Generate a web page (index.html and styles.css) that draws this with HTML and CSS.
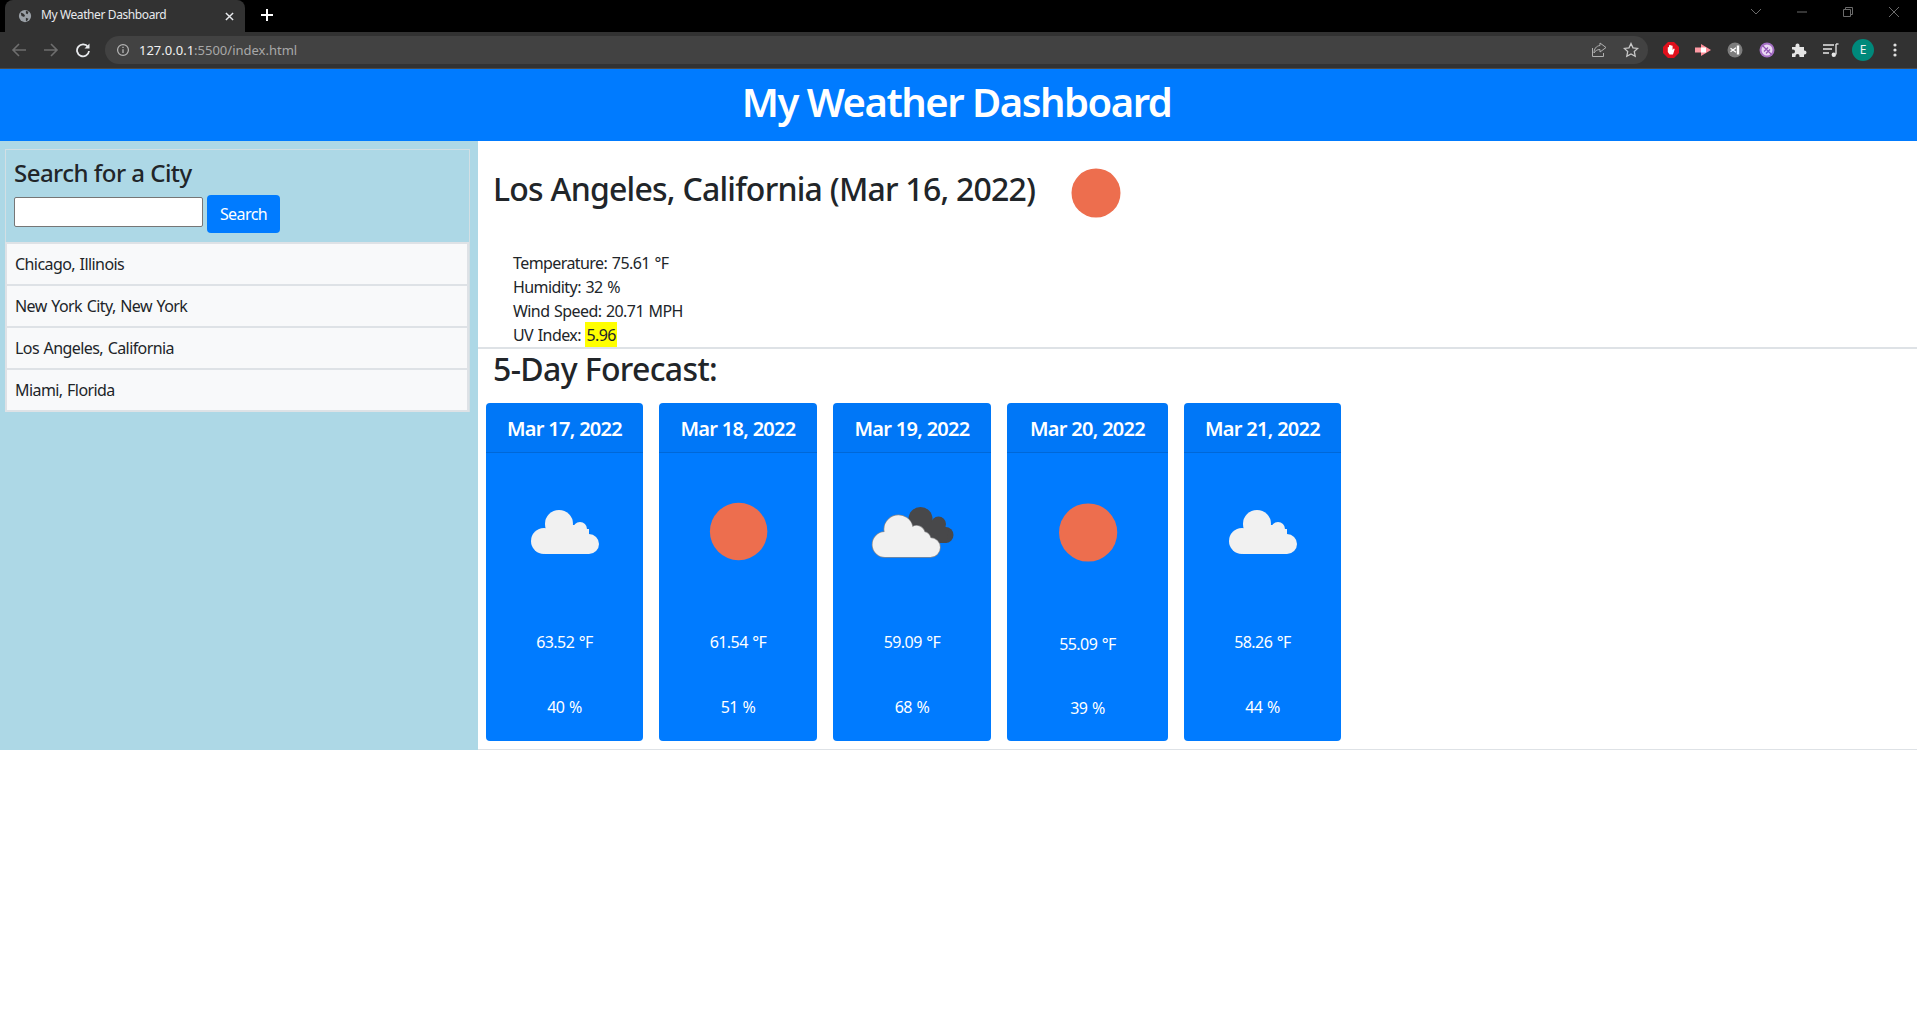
FILE: index.html
```html
<!DOCTYPE html>
<html lang="en">
<head>
<meta charset="utf-8">
<title>My Weather Dashboard</title>
<link rel="stylesheet" href="styles.css">
</head>
<body>
<svg class="defs" width="0" height="0" aria-hidden="true">
  <symbol id="sun" viewBox="0 0 100 100"><circle cx="50.400" cy="50" r="18.300" fill="#ed6e4e"/></symbol>
  <symbol id="sun-large" viewBox="0 0 100 100"><circle cx="50" cy="50" r="24.500" fill="#ed6e4e"/></symbol>
  <symbol id="cloud" viewBox="0 0 157 157">
    <g transform="translate(45 57)" fill="#f1f1f1">
      <circle cx="13" cy="31" r="13"/><circle cx="28" cy="14" r="14"/><circle cx="49" cy="19" r="7"/><circle cx="58" cy="34" r="10"/>
      <rect x="14" y="19" width="44" height="25"/><rect x="28" y="15" width="21" height="6"/><rect x="50" y="24" width="8" height="4"/>
    </g>
  </symbol>
  <symbol id="clouds" viewBox="0 0 157 157">
    <g transform="translate(39 61)">
      <g fill="#48484a"><circle cx="48" cy="5" r="12"/><circle cx="66" cy="10" r="7.500"/><circle cx="73" cy="21" r="8"/><path d="M44 8h24l8 8-2 13H58z"/></g>
      <path d="M13 43a12.500 12.500 0 0 1-1-25 14 14 0 0 1 28-5 8 8 0 0 1 12 5 8 8 0 0 1 6 6 9.500 9.500 0 0 1 0 19z" fill="#f1f1f1" stroke="#8c8c8e" stroke-width="1.500" paint-order="stroke"/>
    </g>
  </symbol>
</svg>

<div class="browser">
  <div class="tabstrip">
    <div class="tab">
      <svg class="favicon" viewBox="0 0 16 16"><circle cx="8" cy="8" r="7" fill="#9aa0a6"/><path d="M3 4l3 1 2 2-1 2-3-1zM9 2l3 1-1 3-2-1zM9 10l3 1-2 3-1-1z" fill="#323232"/></svg>
      <span class="tab-title">My Weather Dashboard</span>
      <svg class="tab-close" viewBox="0 0 10 10"><path d="M1 1l8 8M9 1l-8 8" stroke="#e8eaed" stroke-width="1.600"/></svg>
    </div>
    <svg class="new-tab" viewBox="0 0 12 12"><path d="M6 0v12M0 6h12" stroke="#fff" stroke-width="2"/></svg>
    <div class="window-controls">
      <svg class="win" viewBox="0 0 12 12"><path d="M1 3l5 5 5-5" stroke="#6b6b6b" fill="none"/></svg>
      <svg class="win" viewBox="0 0 12 12"><path d="M1 6h10" stroke="#6b6b6b"/></svg>
      <svg class="win" viewBox="0 0 12 12"><path d="M1.500 3.500h7v7h-7zM3.500 3.500v-2h7v7h-2" stroke="#6b6b6b" fill="none"/></svg>
      <svg class="win" viewBox="0 0 12 12"><path d="M1 1l10 10M11 1L1 11" stroke="#6b6b6b" fill="none"/></svg>
    </div>
  </div>
  <div class="toolbar">
    <div class="nav">
      <svg class="nav-icon" viewBox="0 0 16 16"><path d="M15 8H2M8 2L2 8l6 6" stroke="#6e6e6e" stroke-width="1.600" fill="none"/></svg>
      <svg class="nav-icon" viewBox="0 0 16 16"><path d="M1 8h13M8 2l6 6-6 6" stroke="#6e6e6e" stroke-width="1.600" fill="none"/></svg>
      <svg class="nav-icon" viewBox="0 0 16 16"><path d="M13 5a6 6 0 1 0 1 4" stroke="#e8eaed" stroke-width="1.800" fill="none"/><path d="M14.500 1.500v5h-5z" fill="#e8eaed"/></svg>
    </div>
    <div class="omnibox">
      <svg class="info" viewBox="0 0 16 16"><circle cx="8" cy="8" r="6.200" stroke="#b5b5b5" stroke-width="1.400" fill="none"/><path d="M8 7v4.500M8 4.200v1.500" stroke="#b5b5b5" stroke-width="1.500"/></svg>
      <span class="url"><span class="url-host">127.0.0.1</span>:5500/index.html</span>
      <span class="spacer"></span>
      <svg class="omni-icon" viewBox="0 0 16 16"><path d="M9 3.500V1l6 4.500L9 10V7.500C6 7.500 4 9 3 11 3 7 5 4 9 3.500zM1.500 6v8.500h11V11" stroke="#b0b0b0" stroke-width="1" fill="none"/></svg>
      <svg class="omni-icon" viewBox="0 0 16 16"><path d="M8 1.500l2 4.300 4.700.6-3.400 3.200.9 4.700L8 12l-4.200 2.300.9-4.700L1.300 6.400 6 5.800z" stroke="#c8c8c8" stroke-width="1.300" fill="none"/></svg>
    </div>
    <div class="extensions">
      <svg class="ext" viewBox="0 0 16 16"><path d="M5 0h6l5 5v6l-5 5H5l-5-5V5z" fill="#e0101c"/><path d="M4.800 8V5.500a.6.600 0 0 1 1.200 0V3.500a.6.600 0 0 1 1.200 0 .6.600 0 0 1 1.200 0V4a.6.600 0 0 1 1.200 0V8l.9-1.200a.7.700 0 0 1 1.100.8L10 12.500H6.500L4.800 10z" fill="#fff"/></svg>
      <svg class="ext" viewBox="0 0 16 16"><path d="M6 2l10 6-10 6z" fill="#ff8d99"/><path d="M0 5.500h10v5H0z" fill="#ff9aa4"/><path d="M6 5.500h5v5H6z" fill="#fff"/></svg>
      <svg class="ext" viewBox="0 0 16 16"><circle cx="8" cy="8" r="7.500" fill="#7d7d7d"/><path d="M3.500 6.200l5.500 4M3.500 9.800l5.500-4" stroke="#fff" stroke-width="1.300"/><path d="M11 3.500v9" stroke="#fff" stroke-width="2.400"/></svg>
      <svg class="ext" viewBox="0 0 16 16"><circle cx="8" cy="8" r="7.500" fill="#a46fc4"/><circle cx="8" cy="8" r="5.500" fill="#ead9f3"/><path d="M3.500 3.500l9 9M5 9.500l4-4M7 11.500l4-4" stroke="#9054b5" stroke-width="1.200"/></svg>
      <svg class="ext" viewBox="0 0 16 16"><path d="M1 5h3.500V3.500a2 2 0 0 1 4 0V5H13v3.500h.5a2 2 0 0 1 0 4H13V15H8.500v-1a2 2 0 0 0-4 0v1H1v-3.500h1a2 2 0 0 0 0-4H1z" fill="#e4e4e4"/></svg>
      <svg class="ext" viewBox="0 0 16 16"><path d="M0 3h11M0 7h9M0 11h6" stroke="#e8e8e8" stroke-width="1.300"/><path d="M13 2v10.500" stroke="#e8e8e8" stroke-width="1.300"/><path d="M13 2h2.500" stroke="#e8e8e8" stroke-width="1.300"/><circle cx="10.800" cy="12.800" r="2.200" fill="#e8e8e8"/></svg>
      <span class="avatar">E</span>
      <svg class="ext" viewBox="0 0 16 16"><circle cx="8" cy="3" r="1.600" fill="#e0e0e0"/><circle cx="8" cy="8" r="1.600" fill="#e0e0e0"/><circle cx="8" cy="13" r="1.600" fill="#e0e0e0"/></svg>
    </div>
  </div>
</div>

<header class="site-header"><h1 class="site-title">My Weather Dashboard</h1></header>

<div class="content">
  <aside class="sidebar">
    <div class="search-box">
      <div class="search-panel">
        <h4 class="search-title">Search for a City</h4>
        <form class="search-row">
          <input class="search-input" type="text" aria-label="City">
          <button class="search-btn" type="button">Search</button>
        </form>
      </div>
      <ul class="city-list">
        <li class="city">Chicago, Illinois</li>
        <li class="city">New York City, New York</li>
        <li class="city">Los Angeles, California</li>
        <li class="city">Miami, Florida</li>
      </ul>
    </div>
  </aside>
  <main class="main">
    <section class="current">
      <div class="current-head">
        <h2 class="heading">Los Angeles, California (Mar 16, 2022)</h2>
        <svg class="current-icon"><use href="#sun-large"/></svg>
      </div>
      <div class="stats">
        <div>Temperature: 75.61 °F</div>
        <div>Humidity: 32 %</div>
        <div>Wind Speed: 20.71 MPH</div>
        <div>UV Index: <span class="uv">5.96</span></div>
      </div>
    </section>
    <h2 class="heading heading-forecast">5-Day Forecast:</h2>
    <div class="cards">
      <article class="card w157">
        <div class="card-date">Mar 17, 2022</div>
        <svg class="card-icon"><use href="#cloud"/></svg>
        <p class="card-temp">63.52 °F</p><p class="card-hum">40 %</p>
      </article>
      <article class="card w158">
        <div class="card-date">Mar 18, 2022</div>
        <svg class="card-icon"><use href="#sun"/></svg>
        <p class="card-temp">61.54 °F</p><p class="card-hum">51 %</p>
      </article>
      <article class="card w158">
        <div class="card-date">Mar 19, 2022</div>
        <svg class="card-icon"><use href="#clouds"/></svg>
        <p class="card-temp">59.09 °F</p><p class="card-hum">68 %</p>
      </article>
      <article class="card w161">
        <div class="card-date">Mar 20, 2022</div>
        <svg class="card-icon card-icon-tall"><use href="#sun"/></svg>
        <p class="card-temp card-temp-tight">55.09 °F</p><p class="card-hum">39 %</p>
      </article>
      <article class="card w157">
        <div class="card-date">Mar 21, 2022</div>
        <svg class="card-icon"><use href="#cloud"/></svg>
        <p class="card-temp">58.26 °F</p><p class="card-hum">44 %</p>
      </article>
    </div>
  </main>
</div>
</body>
</html>
```
FILE: styles.css
```css
* { box-sizing: border-box; }
html, body { margin: 0; padding: 0; }
body {
  background: #fff;
  color: #212529;
  font-family: "Noto Sans", "Open Sans", sans-serif;
  font-size: 16px;
  line-height: 24px;
  letter-spacing: -0.036em;
  word-spacing: 1px;
}
.defs { display: block; height: 0; }

/* browser chrome */
.browser { height: 69px; background: #323232; border-bottom: 1px solid #4a4a4a; letter-spacing: 0; word-spacing: 0; }
.tabstrip { height: 32px; background: #000; display: flex; align-items: stretch; padding-left: 5px; }
.tab {
  width: 240px;
  background: #323232;
  border-radius: 8px 8px 0 0;
  display: flex;
  align-items: center;
  padding: 0 11px 0 13px;
}
.favicon { width: 14px; height: 14px; flex: none; }
.tab-title { margin-left: 9px; font-size: 12px; line-height: 22px; padding-bottom: 2px; color: #e8eaed; white-space: nowrap; flex: 1; letter-spacing: -0.033em; }
.tab-close { width: 9px; height: 9px; flex: none; }
.new-tab { width: 12px; height: 12px; margin: 9px 0 0 16px; flex: none; }
.window-controls { margin-left: auto; display: flex; gap: 34px; padding: 6px 17px 0 0; align-items: flex-start; }
.win { width: 12px; height: 12px; }
.toolbar { height: 36px; display: flex; align-items: center; padding-left: 11px; }
.nav { display: flex; gap: 16px; width: 94px; flex: none; }
.nav-icon { width: 16px; height: 16px; }
.omnibox {
  width: 1543px;
  height: 28px;
  background: #424242;
  border-radius: 14px;
  display: flex;
  align-items: center;
  padding: 0 9px 0 11px;
  flex: none;
}
.info { width: 14px; height: 14px; flex: none; }
.url { margin-left: 9px; font-size: 13px; color: #a8a8a8; white-space: nowrap; }
.url-host { color: #f1f1f1; }
.spacer { flex: 1; }
.omni-icon { width: 16px; height: 16px; margin-left: 16px; }
.extensions { display: flex; align-items: center; gap: 16px; margin-left: 15px; }
.ext { width: 16px; height: 16px; flex: none; }
.avatar {
  width: 22px;
  height: 22px;
  margin: 0 -3px;
  border-radius: 50%;
  background: #00897b;
  color: #f1f1f1;
  font-size: 12px;
  line-height: 22px;
  text-align: center;
  flex: none;
}

/* page */
.site-header { height: 72px; background: #007bff; color: #fff; display: flex; align-items: flex-start; justify-content: center; padding: 9px 4px 0 0; }
.site-title { margin: 0; font-size: 40px; font-weight: 600; line-height: 48px; letter-spacing: -0.037em; word-spacing: 0; }
.content { height: 609px; display: flex; }

.sidebar { width: 478px; flex: none; background: #add8e6; padding: 8px 8px 0 5px; }
.search-box { border: 1px solid #d3dfe4; border-bottom-width: 0; }
.search-panel { padding: 8px 9px 9px 8px; }
.search-title { margin: 0 0 8px; font-size: 24px; font-weight: 500; line-height: 29px; letter-spacing: -0.022em; word-spacing: 0; }
.search-row { display: flex; align-items: flex-start; gap: 4px; }
.search-input { width: 189px; height: 30px; margin-top: 2px; border: 1px solid #767676; border-radius: 2px; background: #fff; }
.search-btn {
  width: 73px;
  height: 38px;
  border: 0;
  border-radius: 4px;
  background: #007bff;
  color: #fff;
  font: inherit;
  letter-spacing: inherit;
  padding: 0;
}
.city-list { list-style: none; margin: 0 0 0 -1px; padding: 0; width: 464px; }
.city {
  height: 44px;
  margin-bottom: -2px;
  padding-left: 8px;
  background: #f8f9fa;
  border: 2px solid #dee2e6;
  line-height: 40px;
  white-space: nowrap;
}

.main { flex: 1; border-bottom: 1px solid #dee2e6; }
.current { height: 208px; border-bottom: 2px solid #dee2e6; }
.current-head { height: 110px; display: flex; align-items: flex-start; padding-left: 15px; }
.heading { margin: 0; font-size: 32px; font-weight: 500; line-height: 38px; white-space: nowrap; letter-spacing: -0.024em; word-spacing: 0; }
.current-head .heading { margin-top: 29px; }
.current-icon { width: 100px; height: 100px; margin: 2px 0 0 11px; flex: none; }
.stats { padding-left: 35px; }
.uv { background: #ffff00; padding: 2px 1px 1px; }
.heading-forecast { padding: 1px 0 0 15px; height: 54px; letter-spacing: -0.02em; }
.cards { display: flex; gap: 16px; padding-left: 8px; height: 338px; }
.card {
  background: #007bff;
  color: #fff;
  border-radius: 4px;
  text-align: center;
  display: flex;
  flex-direction: column;
  flex: none;
  overflow: hidden;
}
.w157 { width: 157px; }
.w158 { width: 158px; }
.w161 { width: 161px; }
.card-date {
  height: 50px;
  line-height: 51px;
  font-size: 20px;
  font-weight: 600;
  letter-spacing: -0.035em;
  word-spacing: 0;
  background: rgba(0, 0, 0, .03);
  border-bottom: 1px solid rgba(0, 0, 0, .125);
  white-space: nowrap;
}
.card-icon { width: 100%; height: 157px; flex: none; }
.card-icon-tall { height: 159px; }
.card-temp { margin: 20px 0 41px; }
.card-temp-tight { margin-bottom: 40px; }
.card-hum { margin: 0; }
```
